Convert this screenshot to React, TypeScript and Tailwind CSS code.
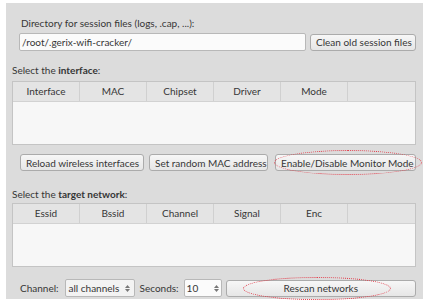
import React from 'react'

const font = { fontFamily: 'Lato, "Noto Sans", sans-serif' }

function Button({ children, className = '' }: { children: React.ReactNode; className?: string }) {
  return (
    <button
      className={`h-[17px] shrink-0 whitespace-nowrap rounded-[3px] border border-[#ababab] bg-gradient-to-b from-[#f7f7f7] to-[#e6e6e6] px-[5px] text-[10px] leading-none text-[#363636] ${className}`}
    >
      {children}
    </button>
  )
}

function Ellipse({ className }: { className: string }) {
  return <span className={`pointer-events-none absolute rounded-[50%] border border-dotted border-[#e23c4a] ${className}`} />
}

function Table({ columns }: { columns: string[] }) {
  return (
    <div className="flex h-[64px] flex-col border border-[#c4c4c4] bg-[#f7f7f7]">
      <div className="flex h-[20px] border-b border-[#d2d2d2] bg-[#e4e4e4]">
        {columns.map((c) => (
          <div
            key={c}
            className="flex w-[67px] items-center justify-center border-r border-[#d0d0d0] text-[10px] text-[#363636]"
          >
            {c}
          </div>
        ))}
        <div className="flex-1" />
      </div>
      <div className="flex-1" />
    </div>
  )
}

function Spin() {
  return (
    <span className="flex flex-col items-center justify-center gap-[1px] text-[#777]">
      <svg width="5" height="3" viewBox="0 0 5 3">
        <path d="M0 3 L2.5 0 L5 3 Z" fill="currentColor" />
      </svg>
      <svg width="5" height="3" viewBox="0 0 5 3">
        <path d="M0 0 L2.5 3 L5 0 Z" fill="currentColor" />
      </svg>
    </span>
  )
}

export default function App() {
  return (
    <div className="h-[305px] w-[428px] bg-white pl-[6px] pt-[3px]" style={font}>
      <div className="flex h-[296px] w-[417px] flex-col bg-[#dcdcdc] pl-[6px] pr-[7px] text-[10px] text-[#363636]">
        {/* Session directory */}
        <div className="mt-[14px] pl-[9px] leading-[13px]">Directory for session files (logs, .cap, ...):</div>
        <div className="mt-[3px] flex items-center pl-[7px]">
          <div className="flex h-[18px] w-[287px] items-center rounded-[2px] border border-[#b8b8b8] bg-[#fbfbfb] pl-[2px]">
            /root/.gerix-wifi-cracker/
          </div>
          <Button className="ml-auto w-[106px]">Clean old session files</Button>
        </div>

        {/* Interface */}
        <div className="mt-[13px] leading-[13px]">
          Select the <b>interface</b>:
        </div>
        <div className="mt-[4px]">
          <Table columns={['Interface', 'MAC', 'Chipset', 'Driver', 'Mode']} />
        </div>
        <div className="mt-[9px] flex items-center pl-[8px]">
          <Button className="w-[124px]">Reload wireless interfaces</Button>
          <Button className="ml-[5px] w-[119px]">Set random MAC address</Button>
          <span className="relative ml-auto flex">
            <Button className="w-[141px]">Enable/Disable Monitor Mode</Button>
            <Ellipse className="-bottom-[4px] -left-[1px] -right-[6px] -top-[4px]" />
          </span>
        </div>

        {/* Target network */}
        <div className="mt-[17px] leading-[13px]">
          Select the <b>target network</b>:
        </div>
        <div className="mt-[2px]">
          <Table columns={['Essid', 'Bssid', 'Channel', 'Signal', 'Enc']} />
        </div>
        <div className="mt-[12px] flex items-center pl-[8px]">
          <span>Channel:</span>
          <div className="ml-[6px] flex h-[18px] w-[70px] items-center justify-between rounded-[2px] border border-[#b8b8b8] bg-[#f3f3f3] pl-[3px] pr-[4px]">
            <span>all channels</span>
            <Spin />
          </div>
          <span className="ml-[5px]">Seconds:</span>
          <div className="ml-[5px] flex h-[18px] w-[38px] items-center justify-between rounded-[2px] border border-[#b8b8b8] bg-[#fbfbfb] pl-[2px] pr-[2px]">
            <span>10</span>
            <Spin />
          </div>
          <span className="relative ml-[4px] flex flex-1">
            <Button className="w-full">Rescan networks</Button>
            <Ellipse className="-bottom-[3px] -top-[3px] left-[17px] right-[25px]" />
          </span>
        </div>
      </div>
    </div>
  )
}
